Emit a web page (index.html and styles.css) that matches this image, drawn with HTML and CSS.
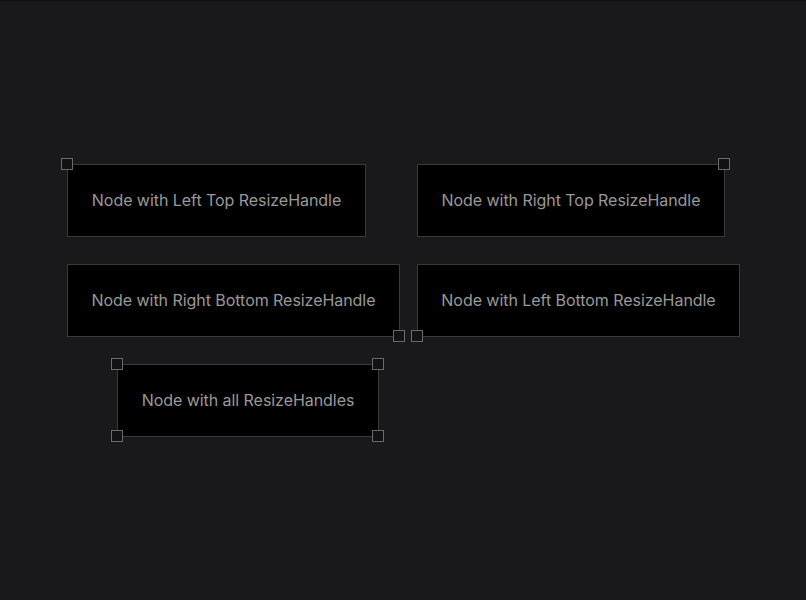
FILE: index.html
```html
<!DOCTYPE html>
<html lang="en">
<head>
<meta charset="utf-8">
<title>Node Resizer</title>
<link rel="stylesheet" href="styles.css">
</head>
<body>
<div class="flow">
  <div class="node" style="left:67px;top:164px;width:299px;">
    <span class="label">Node with Left Top ResizeHandle</span>
    <span class="handle tl"></span>
  </div>
  <div class="node" style="left:417px;top:164px;width:308px;">
    <span class="label">Node with Right Top ResizeHandle</span>
    <span class="handle tr"></span>
  </div>
  <div class="node" style="left:67px;top:264px;width:333px;">
    <span class="label">Node with Right Bottom ResizeHandle</span>
    <span class="handle br"></span>
  </div>
  <div class="node" style="left:417px;top:264px;width:323px;">
    <span class="label">Node with Left Bottom ResizeHandle</span>
    <span class="handle bl"></span>
  </div>
  <div class="node" style="left:117px;top:364px;width:262px;">
    <span class="label">Node with all ResizeHandles</span>
    <span class="handle tl"></span>
    <span class="handle tr"></span>
    <span class="handle bl"></span>
    <span class="handle br"></span>
  </div>
</div>
</body>
</html>
```

FILE: styles.css
```css
html, body {
  margin: 0;
  padding: 0;
  height: 100%;
  background: #19191b;
}

.flow {
  position: relative;
  width: 100%;
  height: 100%;
  box-shadow: inset 0 1px 0 #0f0f13;
  background: #19191b;
  overflow: hidden;
  font-family: Inter, "Noto Sans", sans-serif;
}

.node {
  position: absolute;
  box-sizing: border-box;
  height: 73px;
  padding-bottom: 2px;
  background: #000;
  border: 1px solid #3a3a3c;
  display: flex;
  align-items: center;
  justify-content: center;
}

.label {
  color: #999999;
  font-size: 16px;
  line-height: 20px;
  letter-spacing: -0.05px;
  white-space: nowrap;
}

.handle {
  position: absolute;
  width: 10px;
  height: 10px;
  box-sizing: content-box;
  background: #121214;
  border: 1px solid #6a6a6c;
  transform: translate(-50%, -50%);
}

.tl { left: -1px; top: -1px; }
.tr { left: 100%; top: -1px; }
.bl { left: -1px; top: 100%; }
.br { left: 100%; top: 100%; }
```
